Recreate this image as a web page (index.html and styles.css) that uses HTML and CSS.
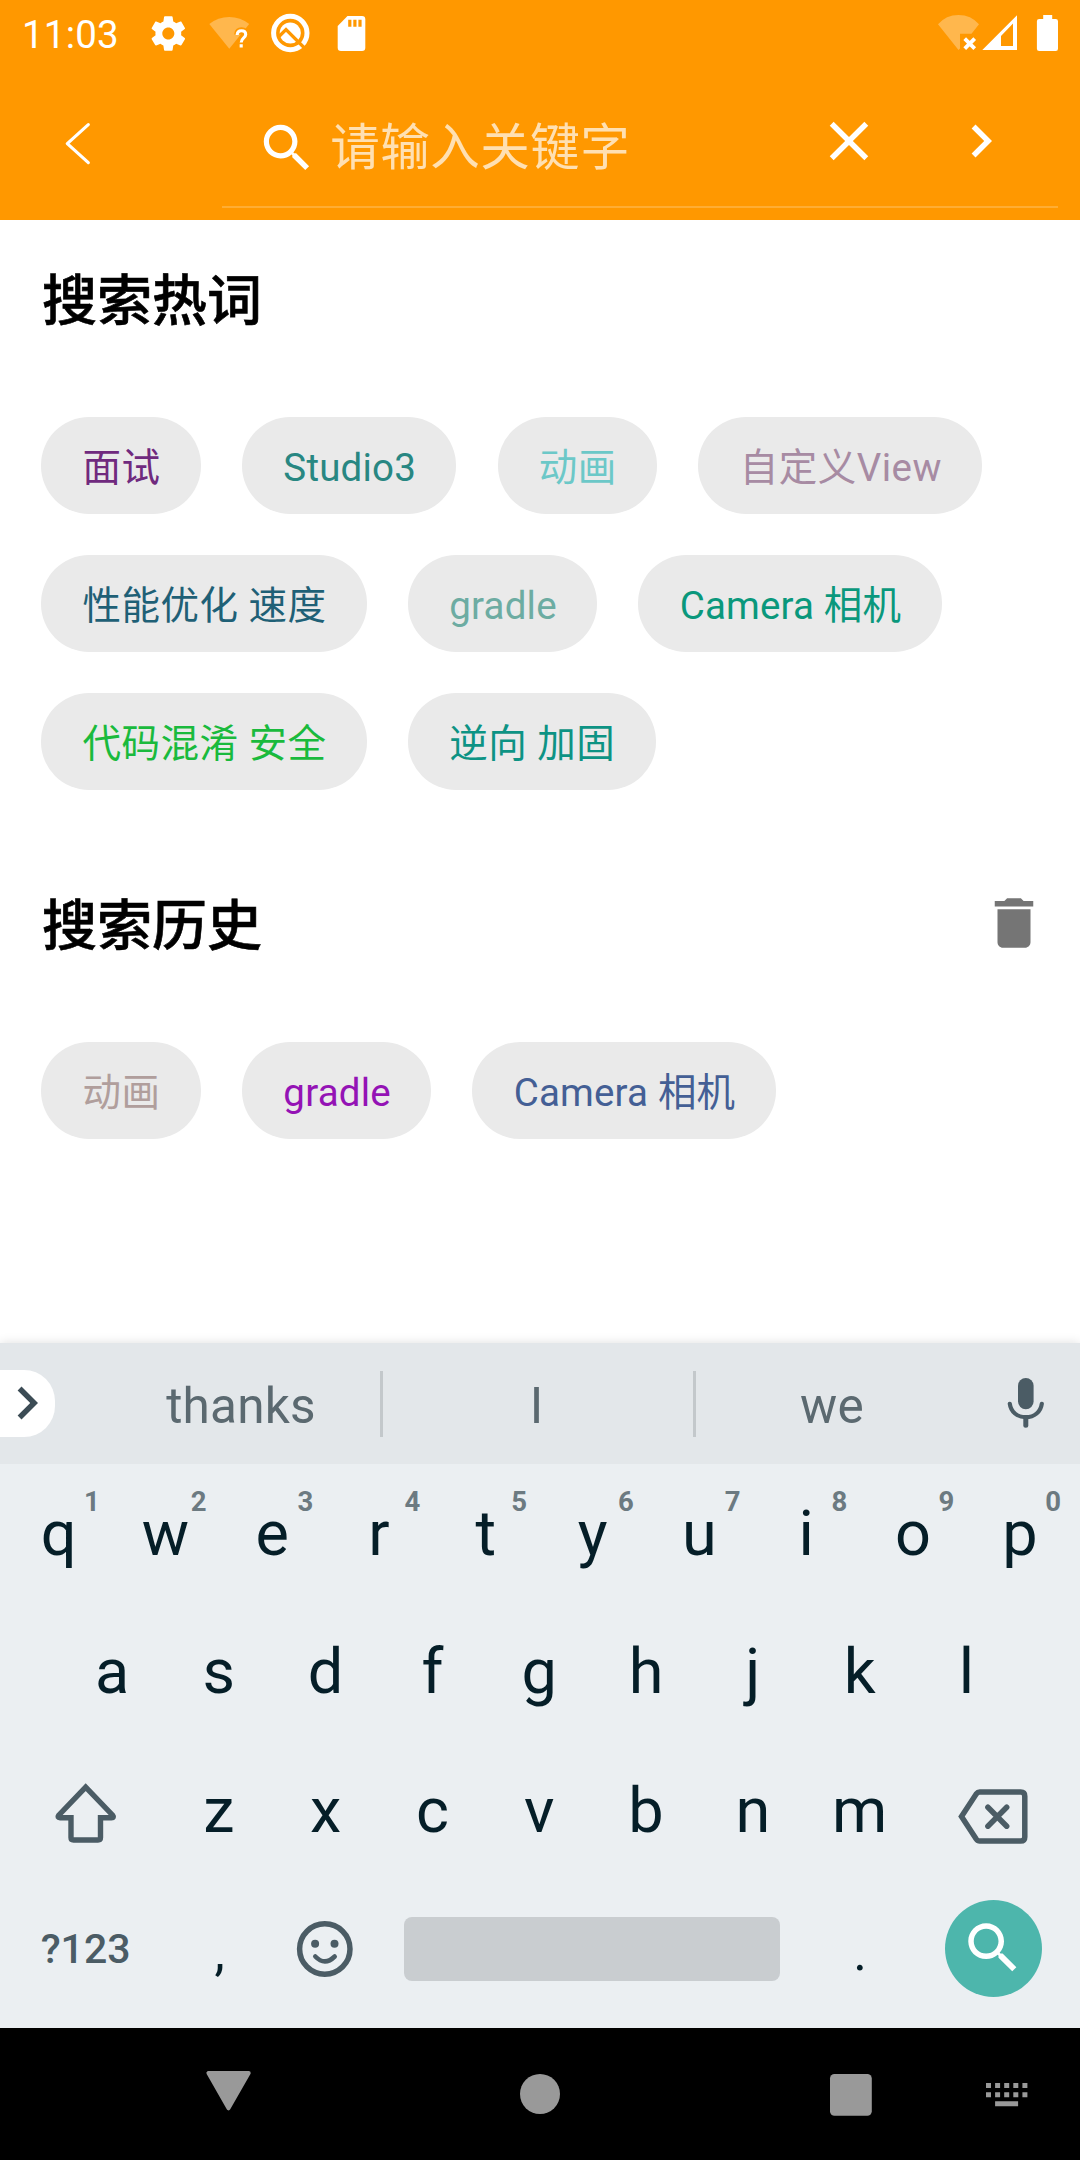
FILE: index.html
```html
<!DOCTYPE html>
<html lang="zh-CN">
<head>
<meta charset="utf-8">
<title>搜索</title>
<link rel="stylesheet" href="styles.css">
</head>
<body>
<div class="screen">
  <header class="appbar">
    <div class="status">
      <span class="clock">11:03</span>
      <svg class="status-left" viewBox="140 0 240 66">
        <g transform="translate(147.7 12.9) scale(1.719)"><path fill="#fff" d="M19.43 12.98c.04-.32.07-.64.07-.98s-.03-.66-.07-.98l2.11-1.65c.19-.15.24-.42.12-.64l-2-3.46c-.12-.22-.39-.3-.61-.22l-2.49 1c-.52-.4-1.08-.73-1.69-.98l-.38-2.65C14.46 2.18 14.25 2 14 2h-4c-.25 0-.46.18-.49.42l-.38 2.65c-.61.25-1.17.59-1.69.98l-2.49-1c-.23-.09-.49 0-.61.22l-2 3.46c-.13.22-.07.49.12.64l2.11 1.65c-.04.32-.07.65-.07.98s.03.66.07.98l-2.11 1.65c-.19.15-.24.42-.12.64l2 3.46c.12.22.39.3.61.22l2.49-1c.52.4 1.08.73 1.69.98l.38 2.65c.03.24.24.42.49.42h4c.25 0 .46-.18.49-.42l.38-2.65c.61-.25 1.17-.59 1.69-.98l2.49 1c.23.09.49 0 .61-.22l2-3.46c.12-.22.07-.49-.12-.64l-2.11-1.65zM12 15.5c-1.93 0-3.5-1.57-3.5-3.5s1.57-3.5 3.5-3.5 3.5 1.57 3.5 3.5-1.57 3.5-3.5 3.5z"/></g>
        <path fill="#ffb74d" d="M209.3 24Q218 17 229.2 17T249.2 24L229.3 48.7Z"/>
        <path fill="none" stroke="#ff9800" stroke-width="7" d="M237.6 34.500C237.600 32 239.300 30.800 241.500 30.800C244 30.800 245.500 32.300 245.500 34.300C245.500 37.600 241.200 37.800 241.200 42.300M241.200 44V47.600"/>
        <path fill="none" stroke="#fff" stroke-width="3.100" d="M237.200 35C237.200 32.200 239 30.800 241.500 30.800C244 30.800 245.700 32.300 245.700 34.600C245.700 37.900 241.200 38 241.200 42.400M241.200 44.300V47.500"/>
        <circle cx="290.300" cy="33" r="16.700" fill="none" stroke="#fff" stroke-width="5"/>
        <circle cx="290.300" cy="33" r="10.600" fill="#fff"/>
        <path fill="none" stroke="#ff9800" stroke-width="3.200" d="M278.500 37L286 29.500L304.500 48"/>
        <path fill="#fff" d="M347.500 16H362Q365.300 16 365.300 19.300V47.700Q365.300 51 362 51H341Q337.700 51 337.700 47.700V26Z"/>
        <path fill="#ff9800" d="M348.200 19.700h3.200v7h-3.200zM353.300 19.700h3.200v7h-3.200zM358.400 19.700h3.200v7h-3.200z"/>
      </svg>
      <svg class="status-right" viewBox="930 0 130 66">
        <path fill="#ffb74d" d="M938 24.300Q946 15 958.500 15T979 24.300L971.500 33.700H960V48.500L958.500 50Z"/>
        <path stroke="#fff" stroke-width="3.800" d="M964.700 38.700l10 10M974.700 38.700l-10 10"/>
        <path fill="#fff" fill-rule="evenodd" d="M1017 15.200V50H982.300ZM1013 23.500L1001 36V46h12Z"/>
        <path fill="#fff" d="M1043.200 15h9v4h3.500q2.300 0 2.300 2.300v27.400q0 2.300-2.300 2.300h-16.500q-2.300 0-2.300-2.300V21.300q0-2.300 2.300-2.300h4z"/>
      </svg>
    </div>
    <div class="toolbar">
      <svg class="back" viewBox="56 110 44 66"><path fill="none" stroke="#fff" stroke-width="3.200" stroke-linecap="round" stroke-linejoin="round" d="M88.300 124.600L67.300 143.600L88.300 162.600"/></svg>
      <div class="field">
        <svg class="search" viewBox="0 0 24 24"><path fill="#fff" d="M15.500 14h-.79l-.28-.27C15.410 12.590 16 11.110 16 9.500 16 5.910 13.090 3 9.500 3S3 5.910 3 9.500 5.910 16 9.500 16c1.610 0 3.090-.59 4.230-1.570l.27.28v.79l5 4.990L20.490 19l-4.990-5zm-6 0C7.010 14 5 11.990 5 9.500S7.010 5 9.500 5 14 7.010 14 9.500 11.990 14 9.500 14z"/></svg>
        <span class="placeholder">请输入关键字</span>
        <svg class="icon clear" viewBox="0 0 24 24"><path fill="#fff" d="M19 6.410L17.590 5 12 10.590 6.410 5 5 6.410 10.590 12 5 17.590 6.410 19 12 13.410 17.590 19 19 17.590 13.410 12z"/></svg>
        <svg class="icon go" viewBox="0 0 24 24"><path fill="#fff" d="M10 6L8.590 7.410 13.170 12l-4.580 4.590L10 18l6-6z"/></svg>
      </div>
    </div>
  </header>

  <main class="content">
    <section class="block">
      <div class="heading"><h2>搜索热词</h2></div>
      <div class="chips">
        <span class="chip c1">面试</span><span class="chip latin c2">Studio3</span><span class="chip c3">动画</span><span class="chip c4">自定义View</span>
        <span class="chip c5">性能优化 速度</span><span class="chip latin c6">gradle</span><span class="chip latin c7">Camera 相机</span>
        <span class="chip c8">代码混淆 安全</span><span class="chip c9">逆向 加固</span>
      </div>
    </section>
    <section class="block">
      <div class="heading"><h2>搜索历史</h2>
        <svg class="icon" viewBox="0 0 24 24"><path fill="#757575" d="M6 19c0 1.100.9 2 2 2h8c1.100 0 2-.9 2-2V7H6v12zM19 4h-3.500l-1-1h-5l-1 1H5v2h14V4z"/></svg>
      </div>
      <div class="chips">
        <span class="chip h1">动画</span><span class="chip latin h2">gradle</span><span class="chip latin h3">Camera 相机</span>
      </div>
    </section>
  </main>

  <div class="keyboard">
    <div class="suggest">
      <div class="expand"><svg viewBox="0 0 24 24"><path fill="#3c4c55" d="M10 6L8.590 7.410 13.170 12l-4.580 4.590L10 18l6-6z"/></svg></div>
      <span class="word first">thanks</span><i class="sep"></i><span class="word mid">I</span><i class="sep"></i><span class="word">we</span>
      <svg class="mic" viewBox="968 1343 112 121">
        <rect x="1018" y="1378" width="15.600" height="31.300" rx="7.800" fill="#4b5c65"/>
        <path fill="none" stroke="#4b5c65" stroke-width="4.200" stroke-linecap="round" d="M1009.800 1403.800C1010.800 1411.800 1017.200 1417.200 1025.800 1417.200S1040.800 1411.800 1041.800 1403.800"/>
        <path stroke="#4b5c65" stroke-width="5" stroke-linecap="round" d="M1025.800 1418v7.200"/>
      </svg>
    </div>
    <div class="keys">
      <div class="row r1">
        <span class="key">q<sup>1</sup></span><span class="key">w<sup>2</sup></span><span class="key">e<sup>3</sup></span><span class="key">r<sup>4</sup></span><span class="key">t<sup>5</sup></span><span class="key">y<sup>6</sup></span><span class="key">u<sup>7</sup></span><span class="key">i<sup>8</sup></span><span class="key">o<sup>9</sup></span><span class="key">p<sup>0</sup></span>
      </div>
      <div class="row r2">
        <span class="key">a</span><span class="key">s</span><span class="key">d</span><span class="key">f</span><span class="key">g</span><span class="key">h</span><span class="key">j</span><span class="key">k</span><span class="key">l</span>
      </div>
      <div class="row r3">
        <svg class="wide" viewBox="6 1741 160.200 138.500"><path fill="none" stroke="#4b5c65" stroke-width="5.400" stroke-linejoin="miter" d="M85.700 1787.200L58.800 1815.200Q57 1817.700 60 1817.700H71V1837.500Q71 1840 73.500 1840H98Q100.500 1840 100.500 1837.500V1817.700H111.500Q114.500 1817.700 112.600 1815.200Z"/></svg>
        <span class="key">z</span><span class="key">x</span><span class="key">c</span><span class="key">v</span><span class="key">b</span><span class="key">n</span><span class="key">m</span>
        <svg class="wide" viewBox="913.800 1741 160.200 138.500"><g fill="none" stroke="#4b5c65" stroke-width="5.500"><path d="M961.300 1816.500L976 1794Q977.500 1792.100 979.500 1792.100H1020.500Q1024.600 1792.100 1024.600 1796.200V1837Q1024.600 1841.100 1020.500 1841.100H979.500Q977.500 1841.100 976 1839Z"/><path stroke-linecap="round" d="M987.700 1807.200l18.800 19M1006.500 1807.200l-18.800 19"/></g></svg>
      </div>
      <div class="row r4">
        <span class="symbols">?123</span>
        <span class="key punct">,</span>
        <svg class="emoji" viewBox="272 1880 106.800 138.500"><g fill="none" stroke="#4b5c65" stroke-width="5.500"><circle cx="324.800" cy="1949" r="25.200"/><path stroke-width="4.600" stroke-linecap="round" d="M315.300 1956.500Q324.800 1966.300 334.700 1956.500"/></g><circle cx="315.100" cy="1943.800" r="4" fill="#4b5c65"/><circle cx="334.500" cy="1943.800" r="4" fill="#4b5c65"/></svg>
        <span class="space"></span>
        <span class="key punct">.</span>
        <span class="enter"><svg class="icon" viewBox="0 0 24 24"><path fill="#fff" d="M15.500 14h-.79l-.28-.27C15.410 12.590 16 11.110 16 9.500 16 5.910 13.090 3 9.500 3S3 5.910 3 9.500 5.910 16 9.500 16c1.610 0 3.090-.59 4.230-1.570l.27.28v.79l5 4.990L20.490 19l-4.990-5zm-6 0C7.010 14 5 11.990 5 9.500S7.010 5 9.500 5 14 7.010 14 9.500 11.990 14 9.500 14z"/></svg></span>
      </div>
    </div>
  </div>

  <nav class="navbar">
    <svg viewBox="0 2028 1080 132" fill="#999">
      <path stroke="#999" stroke-width="4" stroke-linejoin="round" d="M208.400 2073h40.300L228.500 2108.300Z"/>
      <circle cx="540" cy="2094" r="20"/>
      <rect x="830" y="2074" width="41.800" height="41.800" rx="4.500"/>
      <path d="M986 2083h5v5h-5zM995.100 2083h5v5h-5zM1004.200 2083h5v5h-5zM1013.300 2083h5v5h-5zM1022.400 2083h5v5h-5zM986 2092.200h5v5h-5zM995.100 2092.200h5v5h-5zM1004.200 2092.200h5v5h-5zM1013.300 2092.200h5v5h-5zM1022.400 2092.200h5v5h-5zM995.100 2101.300h23v5h-23z"/>
    </svg>
  </nav>
</div>
</body>
</html>
```
FILE: styles.css
```css
* { box-sizing: border-box; }
body { margin: 0; background: #fff; font-family: Roboto, "Noto Sans CJK SC", sans-serif; }
svg { display: block; flex: none; }
.screen { width: 1080px; height: 2160px; display: flex; flex-direction: column; overflow: hidden; background: #fff; }
.icon { width: 66px; height: 66px; }

.appbar { height: 220px; flex: none; background: #ff9800; color: #fff; }
.status { height: 66px; display: flex; align-items: center; padding: 0 20px 0 22px; }
.clock { width: 118px; font-size: 38.5px; letter-spacing: .2px; line-height: 66px; padding-top: 2px; height: 66px; }
.status-left { width: 240px; height: 66px; }
.status-right { width: 130px; height: 66px; margin-left: auto; }
.toolbar { height: 154px; display: flex; align-items: flex-start; padding: 0 22px 0 56px; }
.back { width: 44px; height: 66px; margin-top: 44px; }
.field { margin-left: 122px; width: 836px; height: 142px; display: flex; border-bottom: 2px solid #ffad33; }
.search { width: 62.2px; height: 62.2px; margin: 51px 0 0 34px; }
.placeholder { margin: 46px 0 0 12px; height: 72px; font-size: 49.5px; letter-spacing: .5px; line-height: 72px; color: #ffe0b2; white-space: nowrap; }
.clear { margin: 42.3px 0 0 auto; }
.go { margin: 42.3px 44.5px 0 66px; }

.content { flex: none; height: 1123px; padding: 0 33px 0 41.25px; }
.block { height: 625px; }
.heading { height: 197px; padding-top: 36px; display: flex; justify-content: space-between; }
.heading h2 { margin: 0; padding: 5px 0 0 .75px; font-size: 55px; font-weight: 500; line-height: 80px; height: 85px; color: #000; -webkit-text-stroke: .6px #000; }
.heading .icon { margin-top: 8.75px; }
.chips { display: flex; flex-wrap: wrap; gap: 41px 41.25px; width: 1000px; }
.chip { height: 97px; padding: 4px 40.4px 0 41.25px; border-radius: 48px; background: #eaeaea; font-size: 38.5px; letter-spacing: .48px; line-height: 93px; white-space: nowrap; }
.latin { letter-spacing: .18px; }
.c1 { color: #702a7e; } .c2 { color: #288782; } .c3 { color: #6cc8c8; } .c4 { color: #a78ba3; }
.c5 { color: #1f6076; } .c6 { color: #6daca2; } .c7 { color: #0a987c; } .c8 { color: #1aba3d; } .c9 { color: #0d9384; }
.h1 { color: #b09e9c; } .h2 { color: #9413b5; } .h3 { color: #445f95; }

.keyboard { height: 685px; flex: none; background: #ebeff2; box-shadow: 0 0 10px rgba(0,0,0,.13); }
.suggest { height: 121px; background: #e3e7ea; display: grid; grid-template-columns: 100px 280px 3px 310px 3px 272px 112px; align-items: center; }
.expand { width: 55px; height: 67px; background: #fff; border-radius: 0 31px 31px 0; overflow: hidden; }
.expand svg { width: 66px; height: 66px; margin-left: -5.7px; }
.word { text-align: center; font-size: 49.5px; letter-spacing: .2px; line-height: 60px; padding-top: 5px; color: #5b6970; }
.first { padding-left: 2px; }
.mid { padding-right: 3px; }
.sep { height: 66px; background: #c3c8cb; }
.mic { width: 112px; height: 121px; }
.keys { height: 564px; padding: 0 6px; }
.row { height: 138.5px; display: flex; align-items: center; }
.key { position: relative; width: 106.8px; padding: 1px 1.5px 0 0; text-align: center; font-size: 63px; line-height: 138px; color: #051e28; }
.key sup { position: absolute; right: 13px; top: 22px; font-size: 27.5px; font-weight: 700; line-height: 32px; color: #6c7a81; }
.r2 { padding-left: 53.4px; }
.wide { width: 160.2px; height: 138.5px; }
.symbols { width: 160.2px; padding: 1px 1px 0 0; text-align: center; font-size: 41px; font-weight: 500; color: #4b5c65; }
.punct { font-size: 52px; padding: 9px 0 0; }
.emoji { width: 106.8px; height: 138.5px; margin-left: -1px; }
.space { width: 376px; height: 64px; margin: 0 26.5px 0 25.5px; border-radius: 8px; background: #c9cdd0; }
.enter { width: 97px; height: 97px; margin-left: 31px; border-radius: 50%; background: #4db6ac; padding: 15px; }

.navbar { height: 132px; flex: none; background: #000; }
.navbar svg { width: 1080px; height: 132px; }
```
